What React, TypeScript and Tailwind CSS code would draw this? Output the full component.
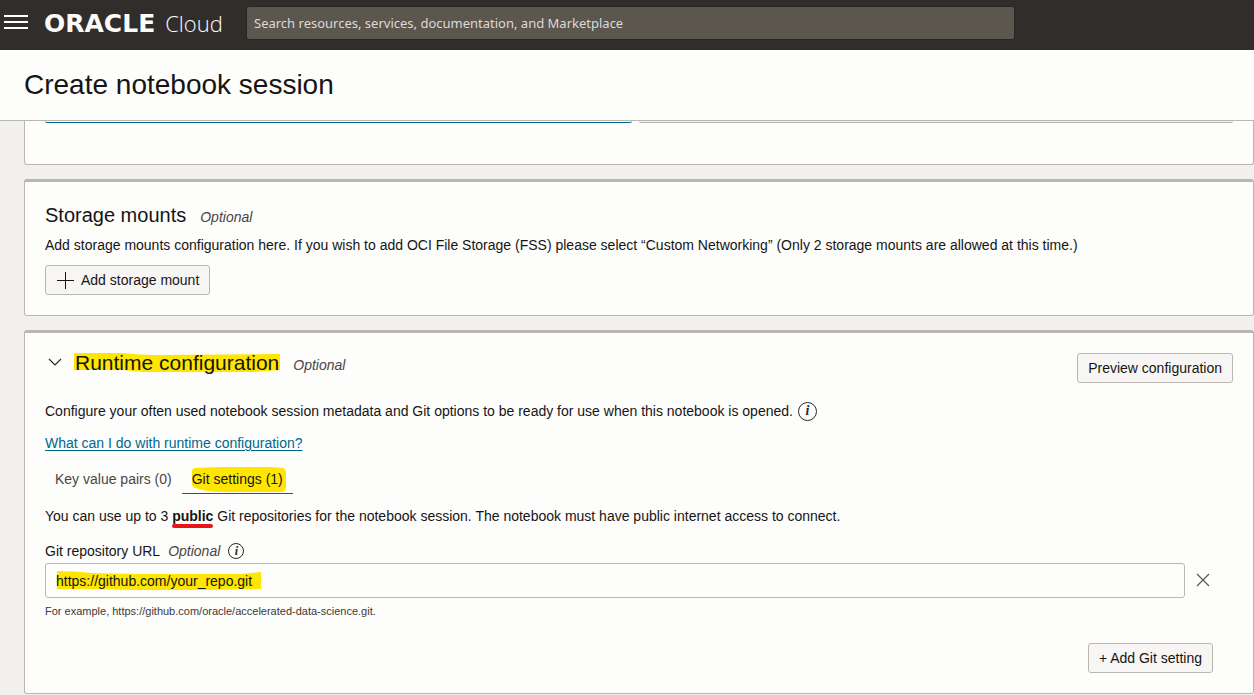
import React from "react";

const button =
  "inline-flex h-[30px] items-center rounded-[3px] border border-[#bcb6b1] bg-[#f7f6f5] px-2.5 text-[#161513]";
const card = "rounded-[3px] border border-[#bcb6b1] bg-[#fdfdfc] px-5";

function Optional() {
  return <em className="text-[14px] leading-5 text-[#4a4643]">Optional</em>;
}

function InfoIcon({ className }: { className: string }) {
  return (
    <span
      aria-hidden="true"
      className={`inline-flex items-center justify-center rounded-full border border-[#2b2927] font-['Liberation_Serif',serif] leading-none font-bold text-[#2b2927] italic ${className}`}
    >
      i
    </span>
  );
}

function Header() {
  return (
    <header className="flex h-[50px] items-center bg-[#312d2a] pb-1">
      <button type="button" aria-label="Open navigation menu" className="ml-1 h-6 w-6">
        <svg viewBox="0 0 24 24" className="h-6 w-6" stroke="#fff" strokeWidth="2">
          <path d="M0 5h24M0 11h24M0 17h24" />
        </svg>
      </button>
      <a href="#home" className="ml-4 flex w-[202px] items-baseline gap-2.5 whitespace-nowrap text-[#fcfbfa]">
        <span className="font-['DejaVu_Sans',sans-serif] text-[25px] leading-8 font-bold">ORACLE</span>
        <span className="font-['Open_Sans',sans-serif] text-[22px] leading-8 font-light">Cloud</span>
      </a>
      <input
        type="search"
        aria-label="Search"
        placeholder="Search resources, services, documentation, and Marketplace"
        className="h-[34px] w-[61.3%] rounded-[3px] border border-[#292522] bg-[#5b564e] px-[7px] font-['Noto_Sans',sans-serif] text-[13px] text-white placeholder:text-[#dedad6]"
      />
    </header>
  );
}

function StorageMounts() {
  return (
    <section className={`${card} mt-3.5 border-t-3 pt-[21px] pb-5`}>
      <div className="flex items-baseline gap-3.5">
        <h2 className="text-[20px] leading-6">Storage mounts</h2>
        <Optional />
      </div>
      <p className="mt-2 leading-5">
        Add storage mounts configuration here. If you wish to add OCI File Storage (FSS) please select “Custom
        Networking” (Only 2 storage mounts are allowed at this time.)
      </p>
      <div className="mt-2.5 flex">
        <button type="button" className={`${button} gap-[5px]`}>
          <svg viewBox="0 0 20 20" className="h-5 w-5" stroke="#161513" aria-hidden="true">
            <path d="M1 10.500h17M9.500 2v17" />
          </svg>
          Add storage mount
        </button>
      </div>
    </section>
  );
}

function RuntimeConfiguration() {
  return (
    <section className={`${card} mt-3.5 border-t-3 pt-5 pb-5`}>
      <div className="flex items-start justify-between">
        <div className="flex items-baseline gap-3.5">
          <h2 className="text-[21px] leading-5">
            <button type="button" aria-expanded="true" className="flex items-baseline">
              <svg
                viewBox="0 0 20 20"
                className="mr-2.5 h-5 w-5 self-center"
                fill="none"
                stroke="#2b2927"
                aria-hidden="true"
              >
                <path d="M4 6 10 12 16 6" strokeWidth="1.2" />
              </svg>
              <span className="relative isolate">
                <svg
                  viewBox="0 0 208 20"
                  preserveAspectRatio="none"
                  className="absolute top-0 -left-px -z-10 h-5 w-[207px]"
                  fill="#ffe600"
                  aria-hidden="true"
                >
                  <path d="M0 0H50Q65 2 90 2L207 1V17L180 19H70L48 17H0Z" />
                </svg>
                Runtime configuration
              </span>
            </button>
          </h2>
          <Optional />
        </div>
        <button type="button" className={button}>
          Preview configuration
        </button>
      </div>

      <p className="mt-[18px] flex items-center gap-[5px] leading-5">
        Configure your often used notebook session metadata and Git options to be ready for use when this notebook is
        opened.
        <InfoIcon className="h-[19px] w-[19px] text-[14px]" />
      </p>
      <a href="#runtime-help" className="mt-3 inline-block leading-5 text-[#00688c] underline underline-offset-2">
        What can I do with runtime configuration?
      </a>

      <div role="tablist" className="mt-3 flex">
        <button
          type="button"
          role="tab"
          aria-selected="false"
          className="h-7 border-b border-transparent px-2.5 text-[#4a4643]"
        >
          Key value pairs (0)
        </button>
        <button
          type="button"
          role="tab"
          aria-selected="true"
          className="relative isolate h-7 border-b border-[#00688c] px-2.5"
        >
          <svg
            viewBox="0 0 95 27"
            className="absolute top-0 left-[9px] -z-10 h-[27px] w-[95px]"
            fill="#ffe600"
            aria-hidden="true"
          >
            <path d="M5 2Q20 1 35 1H80L92 2Q95 3 95 7V21Q95 26 90 26H30Q15 26 5 22Q1 21 1 18V5Q1 2 5 2Z" />
          </svg>
          Git settings (1)
        </button>
      </div>

      <p className="mt-3 leading-5">
        You can use up to 3{" "}
        <strong className="relative font-bold">
          public
          <span className="absolute inset-x-0 -bottom-1 h-1 rounded-full bg-[#e8151c]" />
        </strong>{" "}
        Git repositories for the notebook session. The notebook must have public internet access to connect.
      </p>

      <div className="mt-[15px] flex items-center gap-2">
        <label htmlFor="git-url" className="flex items-center gap-2 leading-5">
          Git repository URL <Optional />
        </label>
        <InfoIcon className="h-4 w-4 text-[12px]" />
      </div>
      <div className="mt-0.5 flex items-center">
        <div className="relative isolate flex-1">
          <svg
            viewBox="0 0 206 20"
            className="absolute top-2 left-[11px] -z-10 h-5 w-[206px]"
            fill="#ffe600"
            aria-hidden="true"
          >
            <path d="M1 0Q20 0 35 2L80 3H185L205 1V18L150 19H80L30 18H1Z" />
          </svg>
          <input
            id="git-url"
            type="text"
            defaultValue="https://github.com/your_repo.git"
            className="block h-[35px] w-full rounded-[3px] border border-[#bcb6b1] bg-transparent px-2.5"
          />
        </div>
        <button type="button" aria-label="Remove Git setting" className="mr-5 ml-2 h-5 w-5">
          <svg viewBox="0 0 20 20" className="h-5 w-5" stroke="#5c5753" strokeWidth="1.200">
            <path d="M4 3 16 15M16 3 4 15" />
          </svg>
        </button>
      </div>
      <p className="mt-[5px] text-[11px] leading-4 text-[#3d3936]">
        For example, https://github.com/oracle/accelerated-data-science.git.
      </p>
      <div className="mt-6 flex justify-end pr-5">
        <button type="button" className={button}>
          + Add Git setting
        </button>
      </div>
    </section>
  );
}

export default function App() {
  return (
    <div className="min-h-screen bg-[#f2f0ef] font-['Liberation_Sans',Arial,sans-serif] text-[14px] text-[#161513]">
      <Header />
      <div className="border-b border-[#bcb6b1] bg-[#fdfdfc] px-6 pt-[17px] pb-[17px]">
        <h1 className="text-[28px] leading-9">Create notebook session</h1>
      </div>
      <main className="pl-6">
        <section className={`${card} h-11 rounded-t-none border-t-0`}>
          <div className="grid grid-cols-[587fr_594fr] gap-[7px]">
            <div className="h-0.5 rounded-b-[3px] border-b border-[#00688c]" />
            <div className="h-0.5 rounded-b-[3px] border-b border-[#bcb6b1] bg-[#f2f0ef]" />
          </div>
        </section>
        <StorageMounts />
        <RuntimeConfiguration />
      </main>
    </div>
  );
}
